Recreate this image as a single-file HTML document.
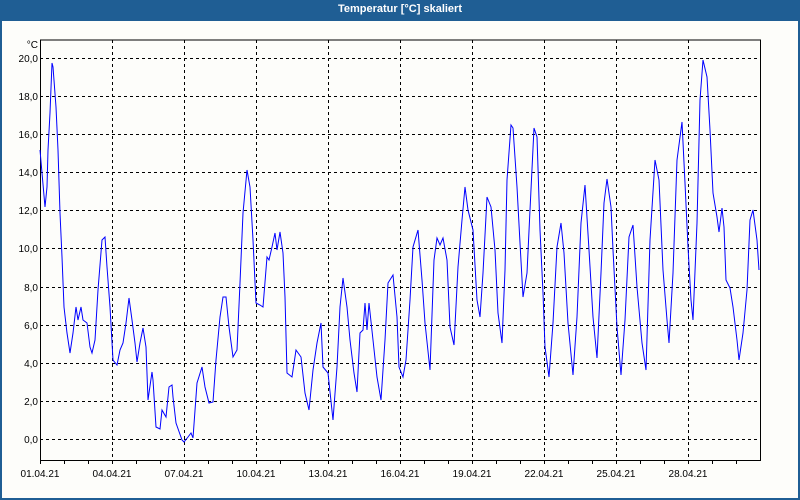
<!DOCTYPE html>
<html><head><meta charset="utf-8"><style>
html,body{margin:0;padding:0}
body{width:800px;height:500px;overflow:hidden;background:#1f5e94;font-family:"Liberation Sans",sans-serif}
.title{position:absolute;left:0;top:0;width:800px;height:20px;color:#fff;font-weight:bold;font-size:11px;line-height:19px;text-align:center}
.panel{position:absolute;left:2px;top:21px;width:796px;height:477px;background:#fdfdfa}
</style></head><body>
<div class="title">Temperatur [°C] skaliert</div>
<div class="panel"></div>
<svg width="800" height="500" style="position:absolute;left:0;top:0" font-family="Liberation Sans, sans-serif" font-size="10">
<g stroke="#000" stroke-width="1" stroke-dasharray="3,3" fill="none">
<path d="M40 58.5H760M40 96.5H760M40 134.5H760M40 172.5H760M40 210.5H760M40 248.5H760M40 287.5H760M40 325.5H760M40 363.5H760M40 401.5H760M40 439.5H760"/>
<path d="M112.5 40V460M184.5 40V460M256.5 40V460M328.5 40V460M400.5 40V460M472.5 40V460M544.5 40V460M616.5 40V460M688.5 40V460"/>
</g>
<path d="M40.5 40V460.5H760.5V40H40" stroke="#000" fill="none"/>
<path d="M64.5 460v4M88.5 460v4M112.5 460v4M136.5 460v4M160.5 460v4M184.5 460v4M208.5 460v4M232.5 460v4M256.5 460v4M280.5 460v4M304.5 460v4M328.5 460v4M352.5 460v4M376.5 460v4M400.5 460v4M424.5 460v4M448.5 460v4M472.5 460v4M496.5 460v4M520.5 460v4M544.5 460v4M568.5 460v4M592.5 460v4M616.5 460v4M640.5 460v4M664.5 460v4M688.5 460v4M712.5 460v4M736.5 460v4M40.5 460v4" stroke="#000"/>
<g fill="#000" text-anchor="end">
<text x="38" y="48">°C</text>
<text x="38" y="62">20,0</text><text x="38" y="100">18,0</text><text x="38" y="138">16,0</text><text x="38" y="176">14,0</text><text x="38" y="214">12,0</text><text x="38" y="252">10,0</text><text x="38" y="291">8,0</text><text x="38" y="329">6,0</text><text x="38" y="367">4,0</text><text x="38" y="405">2,0</text><text x="38" y="443">0,0</text>
</g>
<g fill="#000" text-anchor="middle">
<text x="40" y="477">01.04.21</text><text x="112" y="477">04.04.21</text><text x="184" y="477">07.04.21</text><text x="256" y="477">10.04.21</text><text x="328" y="477">13.04.21</text><text x="400" y="477">16.04.21</text><text x="472" y="477">19.04.21</text><text x="544" y="477">22.04.21</text><text x="616" y="477">25.04.21</text><text x="688" y="477">28.04.21</text>
</g>
<polyline fill="none" stroke="#0000ff" stroke-width="1" points="40,150 42,173 45,207 47,187 48,150 50,113 52,63 53,67 56,107 58,150 60,213 62,257 64,307 67,333 70,353 73,333 76,307 78,320 81,307 83,320 87,323 90,347 92,353 95,340 98,290 102,240 105,237 107,267 110,307 113,360 117,365 120,350 123,343 126,323 129,298 132,320 135,343 137,362 140,343 143,328 146,347 148,400 152,372 153,380 156,427 160,429 162,410 166,417 169,387 172,385 173,397 176,423 182,440 184,442 188,437 191,433 193,438 197,383 202,367 205,387 209,403 213,402 216,360 220,317 223,297 226,297 229,327 233,357 237,350 240,283 243,213 247,170 250,187 253,240 256,303 260,305 263,307 267,257 269,260 272,247 275,233 277,250 280,232 283,253 285,297 287,373 292,377 296,350 301,357 305,393 309,410 313,370 317,343 321,323 323,367 328,373 333,420 337,367 340,307 343,278 347,307 350,340 354,373 357,392 360,333 363,330 365,303 367,330 369,303 373,340 377,377 381,400 385,340 388,283 393,275 397,317 399,367 403,377 406,360 410,300 413,247 418,230 422,280 425,323 430,370 434,260 437,238 440,245 443,238 447,260 450,327 454,345 458,267 462,220 465,187 468,210 473,230 477,300 480,317 483,273 487,197 491,207 495,250 498,313 502,343 505,270 507,180 511,125 513,128 517,187 520,243 523,297 527,273 530,210 534,128 537,137 540,230 543,293 545,347 549,377 553,323 557,247 561,223 564,253 568,323 573,375 577,317 581,223 585,185 589,250 593,317 597,358 601,273 604,203 607,179 611,207 613,250 617,327 621,375 625,320 629,237 633,225 637,287 642,343 646,370 650,240 655,160 659,180 663,270 667,320 669,343 673,273 677,160 682,122 685,183 688,247 691,300 693,320 697,223 700,100 703,60 707,77 710,130 713,193 717,217 719,232 722,208 724,227 726,280 730,288 733,307 737,340 739,360 743,333 747,290 750,220 753,210 757,240 759,270"/>
</svg>
</body></html>
